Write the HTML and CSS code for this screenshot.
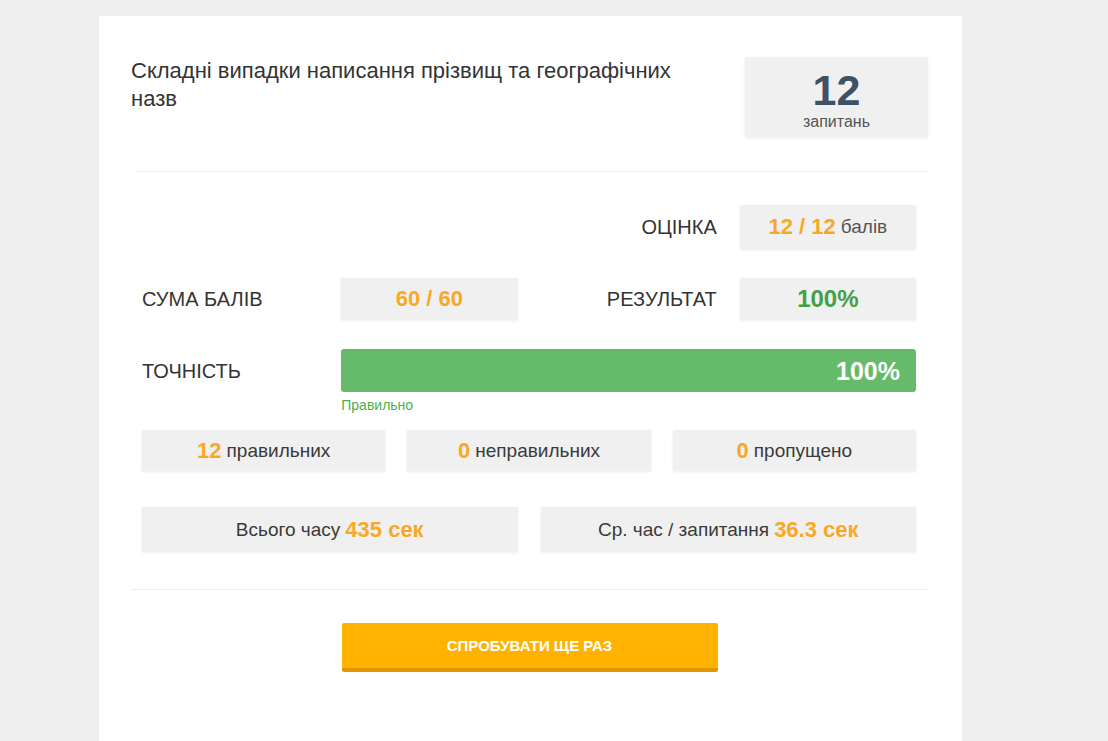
FILE: index.html
```html
<!DOCTYPE html>
<html lang="uk">
<head>
	<meta charset="UTF-8">
	<title>Результат</title>
	<link rel="stylesheet" href="styles.css">
</head>
<body>
	<div class="card">
		<div class="header">
			<div class="title">Складні випадки написання прізвищ та географічних назв</div>
			<div class="count">
				<div class="count-num">12</div>
				<div class="count-label">запитань</div>
			</div>
		</div>
		<div class="divider divider-top"></div>
		<div class="stats">
			<div class="label right col3">ОЦІНКА</div>
			<div class="box tall"><span class="orange">12 / 12</span> <span class="small">балів</span></div>

			<div class="label">СУМА БАЛІВ</div>
			<div class="box"><span class="orange">60 / 60</span></div>
			<div class="label right">РЕЗУЛЬТАТ</div>
			<div class="box"><span class="green">100%</span></div>

			<div class="label label-top">ТОЧНІСТЬ</div>
			<div class="bar-wrap">
				<div class="bar" style="width: 100%;">100%</div>
				<div class="bar-note">Правильно</div>
			</div>

			<div class="trio">
				<div class="box"><span class="orange">12</span> правильних</div>
				<div class="box"><span class="orange">0</span> неправильних</div>
				<div class="box"><span class="orange">0</span> пропущено</div>
			</div>

			<div class="duo">
				<div class="box tall"><span>Всього часу</span> <span class="orange">435 сек</span></div>
				<div class="box tall"><span>Ср. час / запитання</span> <span class="orange">36.3 сек</span></div>
			</div>
		</div>
		<div class="divider"></div>
		<div class="actions">
			<div class="retry">СПРОБУВАТИ ЩЕ РАЗ</div>
		</div>
	</div>
</body>
</html>
```

FILE: styles.css
```css
*{
	box-sizing: border-box;
}
body{
	margin: 0;
	background: #efefef;
	font-family: "Liberation Sans", Arial, sans-serif;
	color: #333;
	padding: 16px 0 0 99px;
}
.card{
	width: 863px;
	min-height: 760px;
	background: #fff;
	padding: 41px 34px 0 32px;
}
.header{
	display: flex;
	justify-content: space-between;
	align-items: flex-start;
}
.title{
	width: 560px;
	font-size: 22px;
	line-height: 28px;
	color: #333;
}
.count{
	width: 183px;
	height: 80px;
	background: #f0f0f0;
	box-shadow: 0 1px 3px rgba(0,0,0,0.08);
	display: flex;
	flex-direction: column;
	align-items: center;
	padding-top: 14px;
}
.count-num{
	font-size: 43px;
	font-weight: bold;
	line-height: 38px;
	color: #3e5266;
}
.count-label{
	font-size: 16px;
	line-height: 18px;
	color: #555;
	margin-top: 4px;
}
.divider{
	height: 1px;
	background: #ececec;
}
.divider-top{
	margin: 34px 0 0 5px;
}
.stats{
	display: grid;
	grid-template-columns: repeat(4, 1fr);
	column-gap: 23px;
	margin: 33px 12px 37px 11px;
	align-items: center;
}
.label{
	font-size: 20px;
	color: #333;
	padding-top: 1px;
}
.right{
	text-align: right;
}
.col3{
	grid-column: 3;
}
.box{
	background: #f0f0f0;
	box-shadow: 0 1px 3px rgba(0,0,0,0.07);
	height: 42px;
	display: flex;
	align-items: center;
	justify-content: center;
	gap: 5px;
	font-size: 19px;
	color: #3a3a3a;
	margin-bottom: 29px;
}
.box.tall{
	height: 44px;
}
.orange{
	color: #f9a825;
	font-weight: bold;
	font-size: 22px;
}
.green{
	color: #43a047;
	font-weight: bold;
	font-size: 24px;
}
.small{
	font-size: 19px;
	color: #555;
}
.stats > .label{
	margin-bottom: 29px;
}
.stats > .label-top{
	align-self: start;
	margin: 10px 0 0;
}
.bar-wrap{
	grid-column: 2 / 5;
	margin-bottom: 17px;
}
.bar{
	height: 43px;
	background: #66bb6a;
	border-radius: 3px;
	color: #fff;
	font-weight: bold;
	font-size: 25px;
	display: flex;
	align-items: center;
	justify-content: flex-end;
	padding-right: 16px;
	padding-top: 2px;
}
.bar-note{
	font-size: 14px;
	line-height: 16px;
	color: #4caf50;
	margin-top: 5px;
}
.trio{
	grid-column: 1 / 5;
	display: grid;
	grid-template-columns: repeat(3, 1fr);
	gap: 22px;
}
.trio .box{
	height: 41px;
	margin-bottom: 36px;
}
.duo{
	grid-column: 1 / 5;
	display: grid;
	grid-template-columns: 1fr 1fr;
	gap: 23px;
}
.duo .box{
	height: 45px;
	margin-bottom: 0;
}
.actions{
	display: flex;
	justify-content: center;
	padding-top: 33px;
}
.retry{
	width: 376px;
	height: 49px;
	background: #ffb300;
	border-bottom: 4px solid #e09600;
	border-radius: 2px;
	color: #fff;
	font-weight: bold;
	font-size: 15px;
	display: flex;
	align-items: center;
	justify-content: center;
}
```
